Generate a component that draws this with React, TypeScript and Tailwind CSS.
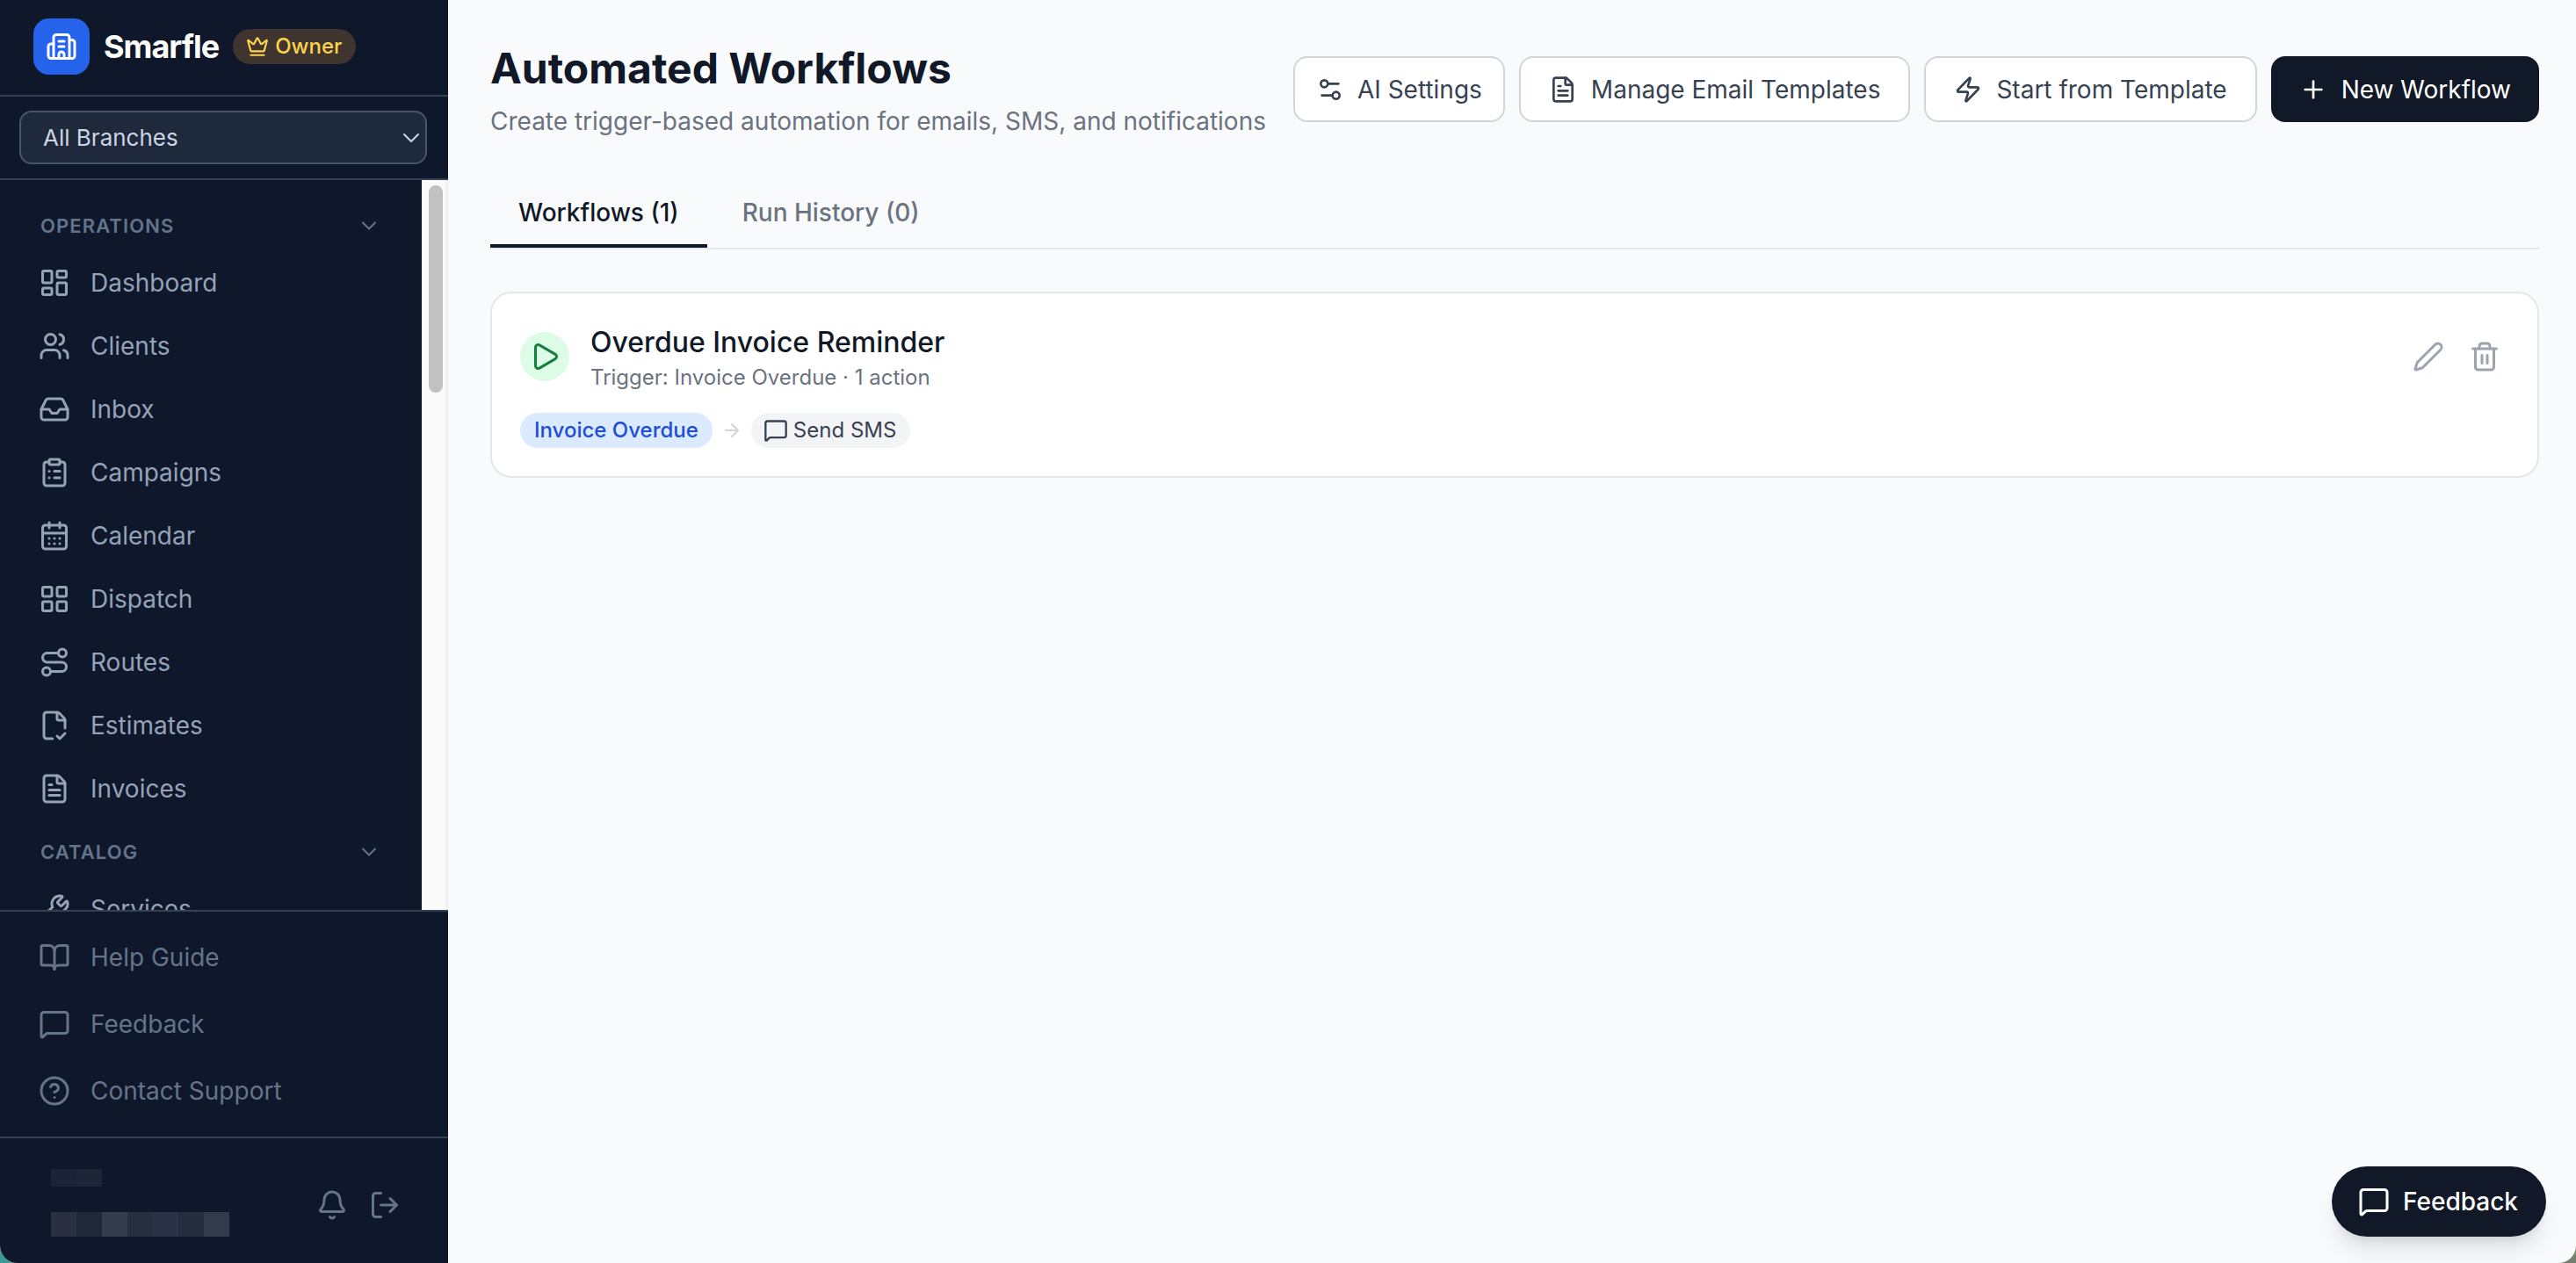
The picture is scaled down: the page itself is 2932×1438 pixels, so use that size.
import {
  ArrowRight,
  Bell,
  BookOpen,
  Building2,
  CalendarDays,
  ChevronDown,
  CircleHelp,
  ClipboardList,
  Crown,
  FileCheckCorner,
  FileText,
  Inbox,
  LayoutDashboard,
  LayoutGrid,
  LogOut,
  MessageSquare,
  Pen,
  Play,
  Plus,
  Route,
  Settings2,
  Trash2,
  Users,
  Wrench,
  Zap,
} from 'lucide-react';

const operations = [
  { label: 'Dashboard', icon: LayoutDashboard },
  { label: 'Clients', icon: Users },
  { label: 'Inbox', icon: Inbox },
  { label: 'Campaigns', icon: ClipboardList },
  { label: 'Calendar', icon: CalendarDays },
  { label: 'Dispatch', icon: LayoutGrid },
  { label: 'Routes', icon: Route },
  { label: 'Estimates', icon: FileCheckCorner },
  { label: 'Invoices', icon: FileText },
];

const footerLinks = [
  { label: 'Help Guide', icon: BookOpen },
  { label: 'Feedback', icon: MessageSquare },
  { label: 'Contact Support', icon: CircleHelp },
];

const SectionHeader = ({ title }: { title: string }) => (
  <div className="flex h-[65px] shrink-0 items-center justify-between pl-[46px] pr-[46px] pt-[7px] text-[#64748b]">
    <span className="text-[22px] font-semibold tracking-[1.1px]">{title}</span>
    <ChevronDown size={28} strokeWidth={1.75} />
  </div>
);

const NavItem = ({ label, icon: Icon }: { label: string; icon: typeof Users }) => (
  <div className="flex h-[72px] shrink-0 items-center gap-[23px] pl-[44px] text-[28px] text-[#94a3b8]">
    <Icon size={36} strokeWidth={2} />
    <span>{label}</span>
  </div>
);

const Sidebar = () => (
  <aside className="flex h-full w-[510px] shrink-0 flex-col bg-[#0f172a]">
    <div className="flex h-[110px] shrink-0 items-center border-b-2 border-[#334155] pb-[2px] pl-[38px]">
      <div className="flex h-[64px] w-[64px] items-center justify-center rounded-[18px] bg-[#2563eb] text-white">
        <Building2 size={36} strokeWidth={2} />
      </div>
      <span className="ml-[16px] text-[36px] font-bold tracking-[-1px] text-white">Smarfle</span>
      <span className="ml-[16px] flex h-[40px] items-center gap-[7px] rounded-full bg-[#40342e] pl-[15px] pr-[16px] text-[24px] font-medium text-[#fcd34d]">
        <Crown size={26} strokeWidth={2} />
        Owner
      </span>
    </div>

    <div className="h-[95px] shrink-0 border-b-2 border-[#334155] pl-[22px] pr-[24px] pt-[16px]">
      <div className="flex h-[61px] items-center justify-between rounded-[14px] border-2 border-[#475569] bg-[#1e293b] pl-[25px] text-[#cbd5e1]">
        <span className="text-[26px]">All Branches</span>
        <ChevronDown size={32} strokeWidth={1.5} />
      </div>
    </div>

    <div className="flex min-h-0 flex-1">
      <nav className="flex min-w-0 flex-1 flex-col overflow-hidden pt-[16px]">
        <SectionHeader title="OPERATIONS" />
        {operations.map((item) => (
          <NavItem key={item.label} {...item} />
        ))}
        <SectionHeader title="CATALOG" />
        <NavItem label="Services" icon={Wrench} />
      </nav>
      <div className="w-[30px] shrink-0 border-l-2 border-r-[3px] border-l-white border-r-[#f0f0f0] bg-[#fafafa] pl-[6px] pt-[6px]">
        <div className="h-[236px] w-[16px] rounded-full bg-[#c1c1c1]" />
      </div>
    </div>

    <div className="shrink-0 border-t-2 border-b-2 border-[#334155] py-[14px]">
      {footerLinks.map(({ label, icon: Icon }) => (
        <div key={label} className="flex h-[76px] items-center gap-[23px] pl-[44px] text-[28px] text-[#64748b]">
          <Icon size={36} strokeWidth={2} />
          <span>{label}</span>
        </div>
      ))}
    </div>

    <div className="flex h-[142px] shrink-0 items-center justify-between pl-[58px] pr-[54px]">
      {/* name and email are blurred out in the picture */}
      <div className="flex flex-col gap-[29px] pt-[5px]">
        <div className="flex h-[20px]">
          <div className="w-[29px] bg-[#1b2336]" />
          <div className="w-[29px] bg-[#1e2537]" />
        </div>
        <div className="flex h-[28px]">
          <div className="w-[29px] bg-[#2a3040]" />
          <div className="w-[29px] bg-[#1f2738]" />
          <div className="w-[29px] bg-[#333b4d]" />
          <div className="w-[29px] bg-[#272e3e]" />
          <div className="w-[29px] bg-[#2a3245]" />
          <div className="w-[29px] bg-[#242c3d]" />
          <div className="w-[29px] bg-[#333a4b]" />
        </div>
      </div>
      <div className="flex items-center gap-[24px] pt-[10px] text-[#64748b]">
        <Bell size={36} strokeWidth={2} />
        <LogOut size={36} strokeWidth={2} />
      </div>
    </div>
  </aside>
);

const OutlineButton = ({ icon: Icon, label, small }: { icon: typeof Users; label: string; small?: boolean }) => (
  <button
    className={
      small
        ? 'flex h-[75px] shrink-0 items-center gap-[15px] whitespace-nowrap rounded-[16px] border-2 border-[#d1d5db] bg-white px-[24px] text-[28px] text-[#374151]'
        : 'flex h-[75px] shrink-0 items-center gap-[16px] whitespace-nowrap rounded-[16px] border-2 border-[#d1d5db] bg-white px-[32px] text-[28px] text-[#374151]'
    }
  >
    <Icon size={32} strokeWidth={2} />
    {label}
  </button>
);

const App = () => (
  <div className="h-[1438px] w-full overflow-hidden bg-gradient-to-r from-[#3a9a94] to-[#75806f] font-['Inter',sans-serif]">
    <div className="relative flex h-full overflow-hidden rounded-b-[20px] bg-[#f9fafb]">
      <Sidebar />

      <main className="min-w-0 flex-1 pl-[48px] pr-[42px] pt-[48px]">
        <header className="flex items-start justify-between">
          <div className="min-w-0">
            <h1 className="whitespace-nowrap text-[48px] font-bold leading-[60px] text-[#111827]">Automated Workflows</h1>
            <p className="mt-[10px] whitespace-nowrap text-[28px] leading-[40px] text-[#6b7280]">
              Create trigger-based automation for emails, SMS, and notifications
            </p>
          </div>
          <div className="mt-[16px] flex shrink-0 gap-[16px]">
            <OutlineButton small icon={Settings2} label="AI Settings" />
            <OutlineButton icon={FileText} label="Manage Email Templates" />
            <OutlineButton icon={Zap} label="Start from Template" />
            <button className="flex h-[75px] shrink-0 items-center gap-[16px] whitespace-nowrap rounded-[16px] bg-[#111827] px-[32px] text-[28px] text-white">
              <Plus size={32} strokeWidth={2} />
              New Workflow
            </button>
          </div>
        </header>

        <div className="mt-[44px] flex gap-[8px] border-b-2 border-[#e5e7eb] text-[28px] font-medium">
          <div className="flex h-[80px] items-center border-b-4 border-[#111827] px-[32px] pt-[4px] text-[#111827]">
            Workflows (1)
          </div>
          <div className="flex h-[80px] items-center px-[32px] text-[#6b7280]">Run History (0)</div>
        </div>

        <section className="mt-[48px] rounded-[24px] border-2 border-[#e5e7eb] bg-white p-[32px]">
          <div className="flex items-center justify-between">
            <div className="flex items-center gap-[24px]">
              <div className="flex h-[56px] w-[56px] items-center justify-center rounded-full bg-[#dcfce7] text-[#15803d]">
                <Play size={36} strokeWidth={2} />
              </div>
              <div>
                <h3 className="text-[32px] font-medium leading-[48px] text-[#111827]">Overdue Invoice Reminder</h3>
                <p className="text-[24px] leading-[32px] text-[#6b7280]">Trigger: Invoice Overdue · 1 action</p>
              </div>
            </div>
            <div className="flex items-center gap-[8px] text-[#9ca3af]">
              <div className="p-[10px]">
                <Pen size={36} strokeWidth={2} />
              </div>
              <div className="p-[10px]">
                <Trash2 size={36} strokeWidth={2} />
              </div>
            </div>
          </div>

          <div className="mt-[24px] flex items-center gap-[10px]">
            <span className="flex h-[40px] items-center rounded-full bg-[#dbeafe] px-[16px] text-[24px] font-medium text-[#1d4ed8]">
              Invoice Overdue
            </span>
            <ArrowRight size={24} strokeWidth={2} className="text-[#d1d5db]" />
            <span className="flex h-[40px] items-center gap-[6px] rounded-full bg-[#f3f4f6] pl-[14px] pr-[16px] text-[24px] text-[#374151]">
              <MessageSquare size={28} strokeWidth={2} />
              Send SMS
            </span>
          </div>
        </section>
      </main>

      {/* floating feedback button */}
      <button className="absolute bottom-[30px] right-[34px] flex h-[80px] items-center gap-[15px] rounded-full bg-[#111827] pl-[30px] pr-[32px] text-[28px] font-medium text-white shadow-xl">
        <MessageSquare size={36} strokeWidth={2} />
        Feedback
      </button>
    </div>
  </div>
);

export default App;
